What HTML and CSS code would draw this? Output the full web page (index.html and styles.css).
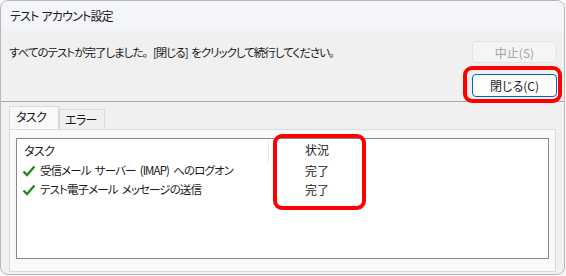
FILE: index.html
```html
<!DOCTYPE html>
<html lang="ja">
<head>
  <meta charset="UTF-8" />
  <title>テスト アカウント設定</title>
  <link rel="stylesheet" href="styles.css">
</head>
<body>
  <div class="window">
    <div class="titlebar">テスト アカウント設定</div>

    <div class="top-row">
      <p class="message">すべてのテストが完了しました<span class="full">。</span>[閉じる] をクリックして続行してください<span class="full">。</span></p>
      <button class="btn" disabled>中止(S)</button>
    </div>
    <div class="close-row">
      <div class="mark-wrap">
        <button class="btn default">閉じる(C)</button>
        <span class="mark mark-close"></span>
      </div>
    </div>
    <div class="separator"></div>

    <div class="tabs">
      <span class="tab active">タスク</span>
      <span class="tab">エラー</span>
    </div>
    <div class="tab-panel">
      <div class="list">
        <div class="list-head">
          <span class="col-task">タスク</span>
          <span class="col-status">状況</span>
        </div>
        <div class="list-row">
          <span class="col-task">
            <svg class="check" width="14" height="12" viewBox="0 0 14 12"><path d="M1.5 6.5 L5 10 L12.5 1.5" fill="none" stroke="#1f8a22" stroke-width="2.4" /></svg>
            <span>受信メール サーバー (IMAP) へのログオン</span>
          </span>
          <span class="col-status">完了</span>
        </div>
        <div class="list-row">
          <span class="col-task">
            <svg class="check" width="14" height="12" viewBox="0 0 14 12"><path d="M1.5 6.5 L5 10 L12.5 1.5" fill="none" stroke="#1f8a22" stroke-width="2.4" /></svg>
            <span>テスト電子メール メッセージの送信</span>
          </span>
          <span class="col-status">完了</span>
        </div>
        <span class="mark mark-status"></span>
      </div>
    </div>
  </div>
</body>
</html>
```

FILE: styles.css
```css
body {
  margin: 0;
  background: #f7f7f7;
  font-family: "Noto Sans CJK JP", "Noto Sans", sans-serif;
  font-size: 12px;
  font-feature-settings: "palt";
  color: #1a1a1a;
}
.window {
  width: 563px;
  height: 273px;
  border: 1px solid #b8b8b8;
  border-radius: 8px;
  background: #f0f0f0;
  overflow: hidden;
}
.titlebar {
  height: 30px;
  line-height: 30px;
  padding-left: 9px;
  letter-spacing: -0.8px;
  word-spacing: 1px;
  background: #f3f5f9;
}
.top-row {
  display: flex;
  justify-content: space-between;
  align-items: center;
  margin-top: 10px;
  padding: 0 7px 0 8px;
}
.message {
  margin: 0;
  font-size: 11.5px;
  line-height: 16px;
  letter-spacing: -1px;
  word-spacing: 2px;
}
.full {
  font-feature-settings: normal;
}
.btn {
  font-family: inherit;
  font-size: 12px;
  font-feature-settings: "palt";
  width: 85px;
  height: 22px;
  padding: 0;
  border: 1px solid #e3e3e3;
  border-radius: 4px;
  background: #f5f5f5;
  color: #a3a3a3;
}
.btn.default {
  height: 23px;
  border-color: #0067c0;
  background: #fdfdfd;
  color: #1a1a1a;
}
.close-row {
  display: flex;
  justify-content: flex-end;
  margin-top: 11px;
  padding-right: 7px;
}
.mark-wrap {
  position: relative;
  display: flex;
}
.mark {
  position: absolute;
  border: 4px solid #ff0000;
  border-radius: 9px;
}
.mark-close {
  left: -9px;
  top: -8px;
  width: 91px;
  height: 29px;
}
.separator {
  height: 1px;
  margin-top: 4px;
  background: #a8a8a8;
}
.tabs {
  display: flex;
  align-items: flex-end;
  height: 22px;
  margin: 5px 0 0 8px;
}
.tab {
  width: 36px;
  height: 19px;
  line-height: 19px;
  padding: 0 3px 0 5px;
  border: 1px solid #dadada;
  border-bottom: none;
  background: #f0f0f0;
  letter-spacing: -0.6px;
}
.tab.active {
  width: 41px;
  height: 22px;
  line-height: 20px;
  padding: 0 1px 0 6px;
  background: #f9f9f9;
}
.tab-panel {
  margin: 0 8px;
  height: 128px;
  padding: 8px 6px 5px;
  border: 1px solid #dadada;
  background: #f9f9f9;
}
.list {
  position: relative;
  height: 119px;
  border: 1px solid #868790;
  background: #fff;
}
.list-head,
.list-row {
  display: flex;
}
.list-head {
  height: 22px;
  line-height: 22px;
}
.list-head .col-task {
  border-right: 1px solid #e8e8e8;
  margin-top: 1px;
  height: 22px;
  letter-spacing: -0.6px;
}
.list-row {
  height: 19px;
  line-height: 19px;
}
.col-task {
  display: flex;
  align-items: center;
  gap: 4px;
  width: 244px;
  padding-left: 7px;
}
.list-row .col-task {
  padding-left: 5px;
  width: 246px;
  font-size: 11.5px;
  letter-spacing: -0.9px;
  word-spacing: 2.5px;
}
.col-status {
  padding-left: 36px;
}
.list-row .col-status {
  padding-left: 37px;
}
.check {
  flex: none;
}
.mark-status {
  left: 256px;
  top: -5px;
  width: 85px;
  height: 68px;
}
```
